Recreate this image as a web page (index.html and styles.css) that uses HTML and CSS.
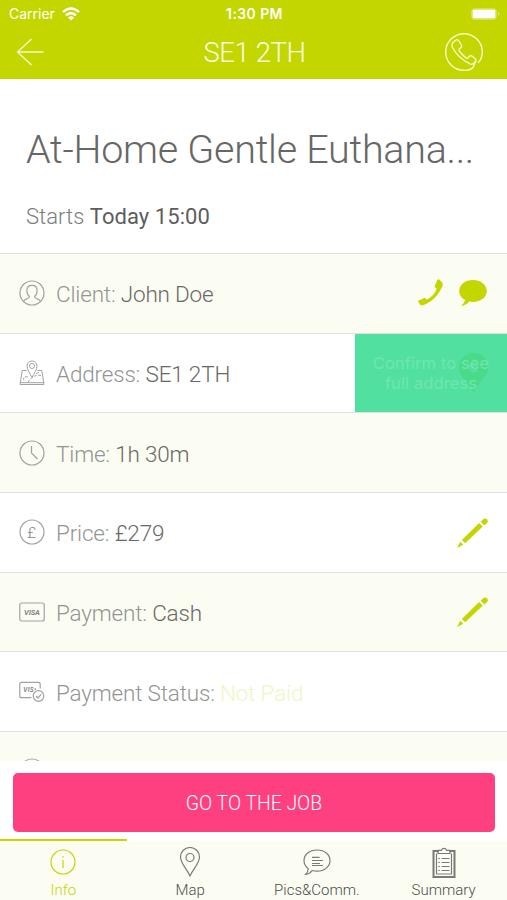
FILE: index.html
```html
<!DOCTYPE html>
<html lang="en">

<head>
  <meta charset="UTF-8">
  <meta name="viewport" content="width=device-width, initial-scale=1.0">
  <title>SE1 2TH</title>
  <link rel="stylesheet" href="styles.css">
</head>

<body>
  <div class="app">
    <header class="header">
      <div class="status">
        <div class="carrier">
          <span class="carrier-name">Carrier</span>
          <svg width="18" height="14" viewBox="0 0 18 14" fill="none" stroke="#fff" stroke-width="2.5">
            <path d="M1 5.1Q9-2.1 17 5.1M4 8.4Q9 3.9 14 8.4" />
            <path d="M6 10.6Q9 8 12 10.6L9 13.6z" fill="#fff" stroke="none" />
          </svg>
        </div>
        <span class="clock">1:30 PM</span>
        <svg class="battery" width="29" height="12" viewBox="0 0 29 12">
          <rect x=".5" y=".5" width="25" height="11" rx="3" fill="none" stroke="#fff" stroke-opacity=".3" />
          <rect x="1.500" y="1.500" width="23" height="9" rx="1.5" fill="#fff" />
          <path d="M27 4v4q1.5-.6 1.5-2T27 4" fill="#fff" fill-opacity=".4" />
        </svg>
      </div>
      <div class="nav">
        <svg width="28" height="28" viewBox="0 0 28 28" fill="none" stroke="#f5f9c8" stroke-width="1.3">
          <path d="M15.500 1L1.500 14l14 13M1.500 14H27.500" />
        </svg>
        <h1 class="nav-title">SE1 2TH</h1>
        <svg width="40" height="40" viewBox="0 0 40 40" fill="none" stroke="#f5f9c8" stroke-width="1.4" stroke-linejoin="round" stroke-linecap="round">
          <path d="M34.600 30.500C37 27.500 38.300 24 38.300 20A18.300 18.300 0 1 0 20 38.300C25 38.600 29 37 30.400 32.500L30.500 30" />
          <path d="M9 10.500L12 8q1.800-.8 2.900 1l2.500 4q.8 1.700-.6 2.700l-1.300 1q-1 .9-.2 2.300 3 4 6.700 6.900 1.300.8 2.300-.3l1.100-1.300q1-1.100 2.600-.2l3.300 2.600q1.600 1.400.3 3.300-2.500 3.100-5.700 1.900Q14 26 8.500 15.500q-1.300-3 .5-5z" />
        </svg>
      </div>
    </header>

    <section class="intro">
      <h2 class="title">At-Home Gentle Euthana...</h2>
      <p class="starts">Starts <b>Today 15:00</b></p>
    </section>

    <main class="details">
      <div class="row">
        <svg class="icon" width="26" height="26" viewBox="0 0 26 26">
          <circle cx="13" cy="13" r="12" />
          <path d="M4.500 21.500C5.500 18.700 10.500 19 10.500 16.500Q7.500 14 8 9.500C8.200 4 17.800 4 18 9.500Q18.500 14 15.500 16.500C15.500 19 20.500 18.700 21.500 21.500" />
        </svg>
        <p class="text">Client: <span class="value">John Doe</span></p>
        <div class="actions">
          <svg class="solid" width="26" height="27" viewBox="0 0 26 27">
            <path d="M19.500.6q1-.8 2 .2l2.600 2.600q1.200 1.600.4 3.600C20.500 17 13 23.500 5 26.200q-1.700.5-2.700-.5L.4 23.200q-.7-1 .4-1.700l5.400-2.400q1-.4 1.700.5l.8 1.200c5-2.500 8.500-6.300 10-11.200l-1.500-1q-.9-.7-.5-1.700z" />
          </svg>
          <svg class="solid" width="28" height="28" viewBox="0 0 28 28">
            <path d="M14 1C6.200 1 .2 5.800.2 12c0 4 2.400 7.200 6 9.100Q5.300 24.500 2 27q5.200-.8 8.200-4.500 1.800.4 3.800.4c7.700 0 13.800-4.700 13.800-10.900S21.700 1 14 1z" />
          </svg>
        </div>
      </div>

      <div class="row">
        <svg class="icon thin" width="26" height="26" viewBox="0 0 26 26">
          <path d="M7.500 10.500H3.200L1 24.500h24l-2.200-14h-4.300M1 22.700h24" />
          <path d="M13 17.500C11 13.500 8 9.500 8 6a5 5 0 0 1 10 0c0 3.500-3 7.500-5 11.500z" />
          <circle cx="13" cy="6" r="2.500" />
          <path d="M5 20.500c-1.500-3 1-4.500 4-3.500M9 22l4-4.500 5-2.500 5 .5M17 13.500l4-1.500" stroke-dasharray="3 1.200" />
        </svg>
        <p class="text">Address: <span class="value">SE1 2TH</span></p>
        <div class="confirm">
          <svg class="confirm-pin" width="29" height="40" viewBox="0 0 29 40">
            <path fill-rule="evenodd" d="M14.500 0C6 0 0 6.300 0 14.500 0 24 9 28 14.500 40 20 28 29 24 29 14.500 29 6.300 23 0 14.500 0zm0 9.500a5 5 0 1 1 0 10 5 5 0 0 1 0-10z" />
          </svg>
          <span class="confirm-text">Confirm to see<br>full address</span>
        </div>
      </div>

      <div class="row">
        <svg class="icon" width="26" height="26" viewBox="0 0 26 26">
          <circle cx="13" cy="13" r="12" />
          <path d="M12.500 6v7l6 6" />
        </svg>
        <p class="text">Time: <span class="value">1h 30m</span></p>
      </div>

      <div class="row">
        <svg class="icon" width="26" height="26" viewBox="0 0 26 26">
          <circle cx="13" cy="13" r="12" />
          <text class="pound" x="12.800" y="18.500">£</text>
        </svg>
        <p class="text">Price: <span class="value">£279</span></p>
        <div class="actions">
          <svg class="solid" width="31" height="31" viewBox="0 0 32 32">
            <path d="M0 32l3.300-6.500 3.200 3.100zM5 23.700L22.800 6.200l3.800 3.700L8.500 27.200zM24.400 5L27 2.200q2-1.500 4 .2 1.600 2 0 3.800l-2.700 2.500z" />
          </svg>
        </div>
      </div>

      <div class="row">
        <svg class="icon" width="26" height="26" viewBox="0 0 26 26">
          <rect x=".8" y="4" width="24.400" height="18" rx="2" />
          <text class="visa" x="13" y="15.900" textLength="16">VISA</text>
        </svg>
        <p class="text">Payment: <span class="value">Cash</span></p>
        <div class="actions">
          <svg class="solid" width="31" height="31" viewBox="0 0 32 32">
            <path d="M0 32l3.300-6.500 3.200 3.100zM5 23.700L22.800 6.200l3.800 3.700L8.500 27.200zM24.400 5L27 2.200q2-1.500 4 .2 1.600 2 0 3.800l-2.700 2.500z" />
          </svg>
        </div>
      </div>

      <div class="row">
        <svg class="icon" width="26" height="26" viewBox="0 0 26 26">
          <path d="M12.500 18.700H2.500q-1.700 0-1.700-1.700V5q0-1.700 1.700-1.700h17q1.700 0 1.700 1.700v4.500" />
          <text class="visa small" x="10.800" y="13.200" textLength="13">VIS•</text>
          <circle cx="19.500" cy="17" r="5.300" />
          <path d="M17 17l2 2 3.200-3.700" />
        </svg>
        <p class="text">Payment Status: <span class="unpaid">Not Paid</span></p>
      </div>

      <div class="row">
        <svg class="icon" width="26" height="26" viewBox="0 0 26 26">
          <circle cx="13" cy="13" r="12" />
        </svg>
      </div>
    </main>

    <div class="bottom">
      <button class="go">GO TO THE JOB</button>
    </div>

    <nav class="tabs">
      <a class="tab active">
        <svg width="26" height="30" viewBox="0 0 26 30">
          <circle cx="13" cy="15" r="12" />
          <path d="M13 13v8M13 9v1.600" />
        </svg>
        <span>Info</span>
      </a>
      <a class="tab">
        <svg width="26" height="30" viewBox="0 0 26 30">
          <path d="M13 29C10 22 3.500 16.500 3.500 10a9.500 9.500 0 0 1 19 0C22.500 16.500 16 22 13 29z" />
          <circle cx="13" cy="10.500" r="4" />
        </svg>
        <span>Map</span>
      </a>
      <a class="tab">
        <svg width="28" height="30" viewBox="0 0 28 30">
          <path d="M14 3C6.500 3 1 7.600 1 13.500c0 3.400 1.700 6.300 4.300 8.200Q5 25 2.700 27.300 6.700 27 9.200 23.500q2.300.7 4.800.7c7.500 0 13-4.700 13-10.700S21.500 3 14 3z" />
          <path d="M9 10.300h7.500M9 13.500h11M9 16.500h8M9 18.500h11" />
        </svg>
        <span>Pics&amp;Comm.</span>
      </a>
      <a class="tab">
        <svg width="26" height="32" viewBox="0 0 26 32">
          <path stroke-width="2" d="M8 4H2.500v26h21V4H18" />
          <path d="M5.500 6.500v20.500h15V6.500M7 6.500V3.300h3.500a2.600 2.600 0 0 1 5 0H19v3.200z" />
          <path d="M10.500 11.500h8M10.500 15.500h8M10.500 19.500h8M10.500 23.500h8" />
          <path d="M7.200 11.500h1.600M7.200 15.500h1.600M7.200 19.500h1.600M7.200 23.500h1.600" />
        </svg>
        <span>Summary</span>
      </a>
    </nav>
  </div>
</body>

</html>
```

FILE: styles.css
```css
* {
  box-sizing: border-box;
}

body {
  margin: 0;
  font-family: Roboto, sans-serif;
  font-weight: 300;
  color: #666766;
  background-color: #fff;
}

h1,
h2,
p {
  margin: 0;
  font-weight: 300;
}

svg {
  display: block;
  flex-shrink: 0;
}

.app {
  display: flex;
  flex-direction: column;
  height: 900px;
  overflow: hidden;
}

.header {
  height: 79px;
  flex-shrink: 0;
  background-color: #c4d600;
  color: #fff;
}

.status {
  display: grid;
  grid-template-columns: 1fr auto 1fr;
  align-items: center;
  height: 27px;
  padding: 0 7px 0 9px;
  font-family: Inter, sans-serif;
  font-size: 14px;
}

.carrier {
  display: flex;
  align-items: center;
  gap: 7px;
}

.carrier-name {
  font-weight: 400;
}

.clock {
  font-size: 14px;
  font-weight: 600;
  letter-spacing: .4px;
}

.battery {
  justify-self: end;
}

.nav {
  display: flex;
  align-items: center;
  justify-content: space-between;
  height: 50px;
  padding: 0 23px 0 16px;
}

.nav-title {
  padding: 2px 0 0 21px;
  font-size: 27.500px;
  line-height: 50px;
  letter-spacing: -.4px;
  color: #fafce4;
}

.intro {
  height: 174px;
  flex-shrink: 0;
  padding: 46px 26px 0;
}

.title {
  font-size: 39.500px;
  line-height: 50px;
  letter-spacing: -.28px;
  white-space: nowrap;
}

.starts {
  margin-top: 28px;
  font-size: 22px;
  line-height: 28px;
  letter-spacing: .05px;
  color: #7c7d7c;
}

.starts b {
  font-weight: 400;
  color: #5c5d5c;
}

.details {
  flex: 1;
  min-height: 0;
  overflow: hidden;
}

.row {
  display: flex;
  align-items: center;
  height: 79.670px;
  padding-left: 18.500px;
  border-top: 1.500px solid #dfe1de;
  background-color: #fff;
}

.row:nth-child(odd) {
  background-color: #fbfdf3;
}

.icon {
  fill: none;
  stroke: #a2a3a1;
  stroke-width: 1.2;
}

.icon.thin {
  stroke-width: 1;
}

.icon text {
  fill: #858685;
  stroke: none;
  text-anchor: middle;
}

.pound {
  font-size: 15.500px;
  font-weight: 300;
}

.visa {
  font-size: 7.500px;
  font-style: italic;
  font-weight: 700;
}

.visa.small {
  font-size: 6.500px;
}

.text {
  padding: 2px 0 0 11.500px;
  font-size: 22.500px;
  line-height: 28px;
  letter-spacing: -.18px;
  color: #949593;
}

.value {
  color: #686967;
}

.unpaid {
  color: #eff6c4;
}

.actions {
  display: flex;
  gap: 15px;
  margin-left: auto;
  padding-right: 19px;
}

.row:first-child .actions {
  padding-right: 20px;
}

.solid {
  fill: #c4d600;
}

.confirm {
  position: relative;
  display: flex;
  align-items: center;
  justify-content: center;
  align-self: stretch;
  width: 152px;
  margin-left: auto;
  background-color: #52e0a1;
}

.confirm-pin {
  position: absolute;
  right: 19px;
  top: 19px;
  fill: #4bda87;
}

.confirm-text {
  position: relative;
  font-family: Inter, sans-serif;
  font-size: 16.500px;
  font-weight: 400;
  line-height: 20px;
  letter-spacing: .1px;
  text-align: center;
  color: #70e6af;
}

.bottom {
  height: 78px;
  flex-shrink: 0;
  padding: 12px 12px 0 13px;
  background-color: #fff;
}

.go {
  display: block;
  width: 100%;
  height: 59px;
  padding: 2px 0 0;
  border: none;
  border-radius: 5px;
  background-color: #ff4080;
  font-family: Roboto, sans-serif;
  font-size: 19.400px;
  font-weight: 300;
  color: #fff;
}

.tabs {
  display: grid;
  grid-template-columns: repeat(4, 1fr);
  height: 61px;
  flex-shrink: 0;
  background-color: #fbfdf3;
}

.tab {
  display: flex;
  flex-direction: column;
  align-items: center;
  justify-content: space-between;
  padding: 6px 0 0;
  border-top: 2px solid #fff;
  font-size: 15px;
  line-height: 20px;
  color: #4c4d4b;
}

.tab svg {
  fill: none;
  stroke: #7a7b79;
  stroke-width: 1.200;
}

.tab.active {
  border-top-color: #c4d600;
  color: #c4d600;
}

.tab.active svg {
  stroke: #c4d600;
}
```
